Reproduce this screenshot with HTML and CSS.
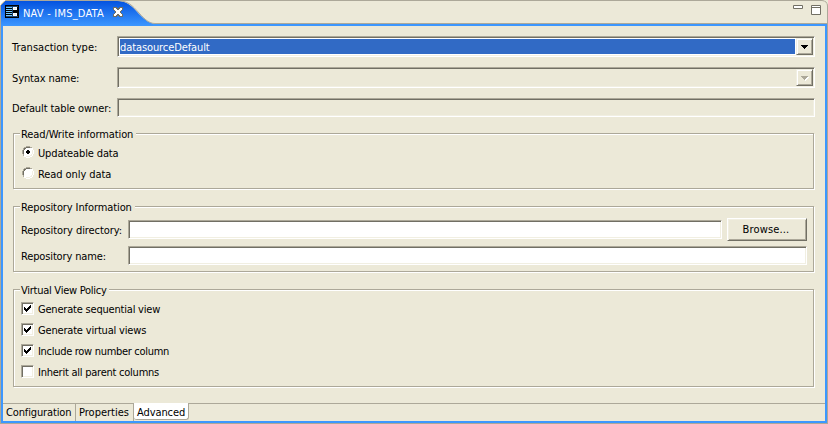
FILE: index.html
```html
<!DOCTYPE html>
<html lang="en">
<head>
<meta charset="utf-8">
<title>NAV - IMS_DATA</title>
<link rel="stylesheet" href="styles.css">
</head>
<body>
<div class="editor">
  <header class="titlebar">
    <svg class="tab-shape" width="828" height="26" viewBox="0 0 828 26" aria-hidden="true">
      <defs><linearGradient id="tabfill" x1="0" y1="0" x2="0" y2="1"><stop offset="0" stop-color="#0453e0"/><stop offset="1" stop-color="#3c97ff"/></linearGradient></defs>
      <path d="M0 0H828V26H0Z" fill="#ece9d8"/>
      <path d="M1 26V5L5 1H119C128 2 132 6 139 14C145 20 149 23 155 24V26Z" fill="url(#tabfill)"/>
      <path d="M0 0H5V1H3V2H2V3H1V5H0Z" fill="#fff"/>
      <path d="M.5 26V5.500L5.500.5H822Q827.500 1 827.500 6V26" fill="none" stroke="#aca899"/>
      <path d="M824 0H828V4Q827 1 824 0Z" fill="#ece9d8"/>
      <path d="M117 .5C128 1 132 5 139 13C145 19.500 149 23.500 155 23.500H827" fill="none" stroke="#aca899"/>
      <path d="M153 24H827V26H153Z" fill="#3c97ff"/>
    </svg>
    <div class="tab">
      <svg class="tab-icon" width="14" height="13" viewBox="0 0 14 13" shape-rendering="crispEdges" aria-hidden="true">
        <path d="M0 0H14V13H0Z" fill="#000"/>
        <path d="M1 2H7V3H1ZM1 4H7V5H1ZM1 6H7V7H1ZM1 8H7V9H1ZM1 10H7V11H1Z" fill="#70c8ff"/>
        <path d="M1 1H13V2H1ZM1 11H13V12H1ZM7 1H8V12H7Z" fill="#3c97ff" opacity=".45"/>
        <path d="M8 2H12V5H8ZM8 8H12V11H8Z" fill="#fff"/>
        <path d="M9 3H11V4H9ZM9 9H11V10H9Z" fill="#d8e8f8"/>
      </svg>
      <span class="tab-title">NAV - IMS_DATA</span>
      <svg class="close" width="10" height="10" viewBox="0 0 10 10" shape-rendering="crispEdges" aria-hidden="true">
        <path d="M0 0H4V1H6V0H10V3H9V4H8V6H9V7H10V10H6V9H4V10H0V7H1V6H2V4H1V3H0Z" fill="#716f64"/>
        <path d="M1 1H3V2H4V3H6V2H7V1H9V3H8V4H7V6H8V7H9V9H7V8H6V7H4V8H3V9H1V7H2V6H3V4H2V3H1Z" fill="#fff"/>
      </svg>
    </div>
    <div class="window-buttons">
      <svg width="10" height="4" viewBox="0 0 10 4" aria-hidden="true"><path d="M.5.5H9.500V3.500H.5Z" fill="#fff" stroke="#716f64"/></svg>
      <svg width="10" height="10" viewBox="0 0 10 10" aria-hidden="true"><path d="M.5.5H9.500V9.500H.5ZM0 2.500H10" fill="#fff" stroke="#716f64"/></svg>
    </div>
  </header>
  <div class="frame">
    <main class="page">
      <div class="row"><label class="caption transaction">Transaction type:</label>
        <div class="sunken combo"><span class="value">datasourceDefault</span><span class="drop"><svg width="8" height="5" viewBox="0 0 8 5" shape-rendering="crispEdges"><path d="M0 0H7V1H6V2H5V3H4V4H3V3H2V2H1V1H0Z" fill="#000"/></svg></span></div></div>
      <div class="row syntax"><label class="caption tight">Syntax name:</label>
        <div class="sunken combo disabled"><span class="value"></span><span class="drop"><svg width="8" height="5" viewBox="0 0 8 5" shape-rendering="crispEdges"><path d="M1 1H8V2H7V3H6V4H5V5H4V4H3V3H2V2H1Z" fill="#fff"/><path d="M0 0H7V1H6V2H5V3H4V4H3V3H2V2H1V1H0Z" fill="#aca899"/></svg></span></div></div>
      <div class="row owner"><label class="caption">Default table owner:</label><div class="sunken disabled"></div></div>

      <section class="group readwrite">
        <h2>Read/Write information</h2>
        <label class="option"><svg class="radio" width="12" height="12" viewBox="0 0 12 12"><use href="#radio"/><path d="M5 4H7V5H8V7H7V8H5V7H4V5H5Z" fill="#000" shape-rendering="crispEdges"/></svg><span class="updateable">Updateable data</span></label>
        <label class="option"><svg class="radio" width="12" height="12" viewBox="0 0 12 12"><g id="radio" shape-rendering="crispEdges"><path d="M4 1H8V2H10V4H11V8H10V10H8V11H4V10H2V8H1V4H2V2H4Z" fill="#fff"/><path d="M4 0H8V1H10V2H8V1H4V2H2V4H1V8H2V10H1V8H0V4H1V2H2V1H4Z" fill="#aca899"/><path d="M4 1H8V2H4V3H3V4H2V8H1V4H2V2H4Z" fill="#716f64"/><path d="M10 2H11V4H12V8H11V10H10V11H8V12H4V11H2V10H4V11H8V10H10V8H11V4H10Z" fill="#fff"/><path d="M10 4H11V8H10V10H8V11H4V10H8V9H9V8H10Z" fill="#f1efe2"/></g></svg><span class="readonly">Read only data</span></label>
      </section>

      <section class="group repository">
        <h2>Repository Information</h2>
        <div class="row directory"><label class="caption">Repository directory:</label><div class="sunken"></div><button class="browse">Browse...</button></div>
        <div class="row name"><label class="caption">Repository name:</label><div class="sunken"></div></div>
      </section>

      <section class="group policy">
        <h2>Virtual View Policy</h2>
        <label class="option"><span class="check"><svg width="7" height="7" viewBox="0 0 7 7" shape-rendering="crispEdges"><path id="tick" d="M0 2H1V3H2V4H3V3H4V2H5V1H6V0H7V3H6V4H5V5H4V6H3V7H2V6H1V5H0Z"/></svg></span><span class="sequential">Generate sequential view</span></label>
        <label class="option"><span class="check"><svg width="7" height="7" viewBox="0 0 7 7" shape-rendering="crispEdges"><use href="#tick"/></svg></span><span class="views">Generate virtual views</span></label>
        <label class="option"><span class="check"><svg width="7" height="7" viewBox="0 0 7 7" shape-rendering="crispEdges"><use href="#tick"/></svg></span><span class="include">Include row number column</span></label>
        <label class="option"><span class="check"></span><span class="inherit">Inherit all parent columns</span></label>
      </section>
    </main>
    <nav class="pages">
      <span class="page-tab configuration">Configuration</span>
      <span class="page-tab properties">Properties</span>
      <span class="page-tab active">Advanced</span>
      <span class="rest"></span>
    </nav>
  </div>
</div>
</body>
</html>
```
FILE: styles.css
```css
* { box-sizing: border-box; }
body {
  margin: 0;
  background: #ece9d8;
  color: #000;
  font: 11px/13px "DejaVu Sans Condensed", "DejaVu Sans", sans-serif;
  letter-spacing: -.1px;
  overflow: hidden;
}
svg { display: block; flex: none; }
.editor { width: 828px; height: 424px; display: flex; flex-direction: column; }

.titlebar { position: relative; height: 26px; display: flex; justify-content: space-between; }
.tab-shape { position: absolute; inset: 0; z-index: -1; }
.tab { display: flex; padding-left: 5px; color: #fff; }
.tab-icon { margin-top: 5px; }
.tab-title { width: 94px; padding: 7px 0 0 4px; letter-spacing: .2px; white-space: nowrap; }
.close { margin-top: 7px; }
.window-buttons { display: flex; gap: 8px; padding: 5px 7px 0 0; }

.frame {
  flex: 1;
  display: flex;
  flex-direction: column;
  border: solid #3c97ff;
  border-width: 0 2px 2px;
  margin: 0 1px 1px;
  box-shadow: 0 0 0 1px #aca899;
  clip-path: inset(0 -1px -1px);
}
.page { flex: 1; padding: 10px 10px 0; white-space: nowrap; }

.row { display: flex; height: 21px; }
.caption { padding: 5px 0 0; flex: none; margin-left: -1px; }
.row > .caption { width: 105px; }
.transaction { letter-spacing: .02px; }
.tight { letter-spacing: -.12px; }
.syntax { margin-top: 10px; }
.owner { margin-top: 10px; height: 19px; }
.owner .caption { padding-top: 4px; }

.sunken {
  flex: 1;
  background: #fff;
  border: 1px solid;
  border-color: #aca899 #fff #fff #aca899;
  box-shadow: inset 1px 1px #716f64, inset -1px -1px #f1efe2;
}
.disabled { background: #ece9d8; }
.combo { display: flex; padding: 1px; }
.value { flex: 1; margin: 1px; background: #316ac5; color: #fff; padding: 2px 0 0; }
.disabled .value { background: none; }
.drop {
  width: 17px;
  background: #ece9d8;
  border: 1px solid;
  border-color: #f1efe2 #716f64 #716f64 #f1efe2;
  box-shadow: inset 1px 1px #fff, inset -1px -1px #aca899;
  padding: 6px 0 0 4px;
}

.group { width: 801px; border: 1px solid #aca899; box-shadow: 1px 1px #fff, inset 1px 1px #fff; }
.group h2 {
  font: inherit;
  margin: -6px 0 0 6px;
  padding-left: 1px;
  background: #ece9d8;
  height: 13px;
}
.readwrite { height: 56px; margin-top: 16px; }
.readwrite h2 { width: 116px; }
.repository { height: 66px; margin-top: 17px; }
.repository h2 { width: 115px; }
.policy { height: 98px; margin-top: 17px; }
.policy h2 { width: 89px; letter-spacing: -.26px; }

.option { display: flex; height: 21px; padding-left: 7px; }
.readwrite .option { padding-left: 8px; }
.readwrite h2 + .option { margin-top: 6px; }
.option > span:last-child { margin: 0 0 0 4px; }
.policy h2 + .option { margin-top: 6px; }
.radio { margin: -1px 0 0; }
.readonly { letter-spacing: -.07px; }
.updateable { letter-spacing: -.13px; }
.check {
  flex: none;
  width: 13px;
  height: 13px;
  background: #fff;
  border: 1px solid;
  border-color: #aca899 #fff #fff #aca899;
  box-shadow: inset 1px 1px #716f64, inset -1px -1px #f1efe2;
  padding: 2px;
}
.option > .check { margin-top: -1px; }
.sequential { letter-spacing: -.2px; }
.views { letter-spacing: -.18px; }
.include { letter-spacing: -.3px; }
.inherit { letter-spacing: -.24px; }

.repository .row { padding-left: 7px; }
.repository .row > .caption { width: 107px; margin: 0; }
.directory { height: 23px; margin-top: 4px; }
.directory .caption { padding-top: 6px; letter-spacing: -.07px; }
.directory .sunken { height: 19px; margin-top: 2px; }
.browse {
  width: 80px;
  margin: 0 6px 0 5px;
  padding: 0 2px 0 0;
  font: inherit;
  letter-spacing: .15px;
  color: #000;
  background: #ece9d8;
  border: 1px solid;
  border-color: #fff #716f64 #716f64 #fff;
  box-shadow: inset 1px 1px #f1efe2, inset -1px -1px #aca899;
}
.name { height: 19px; margin-top: 5px; }
.name .caption { padding-top: 4px; letter-spacing: -.14px; }
.name .sunken { margin-right: 6px; }

.pages { display: flex; height: 18px; }
.page-tab { border: solid #aca899; border-width: 1px 1px 0 0; padding: 2px 0 0 3px; height: 18px; }
.configuration { width: 73px; letter-spacing: -.13px; }
.properties { width: 58px; letter-spacing: 0; }
.active { width: 55px; height: 17px; background: #fff; border-width: 0 1px 1px 0; border-radius: 0 0 3px 3px; padding-top: 3px; }
.rest { flex: 1; border-top: 1px solid #aca899; }
```
